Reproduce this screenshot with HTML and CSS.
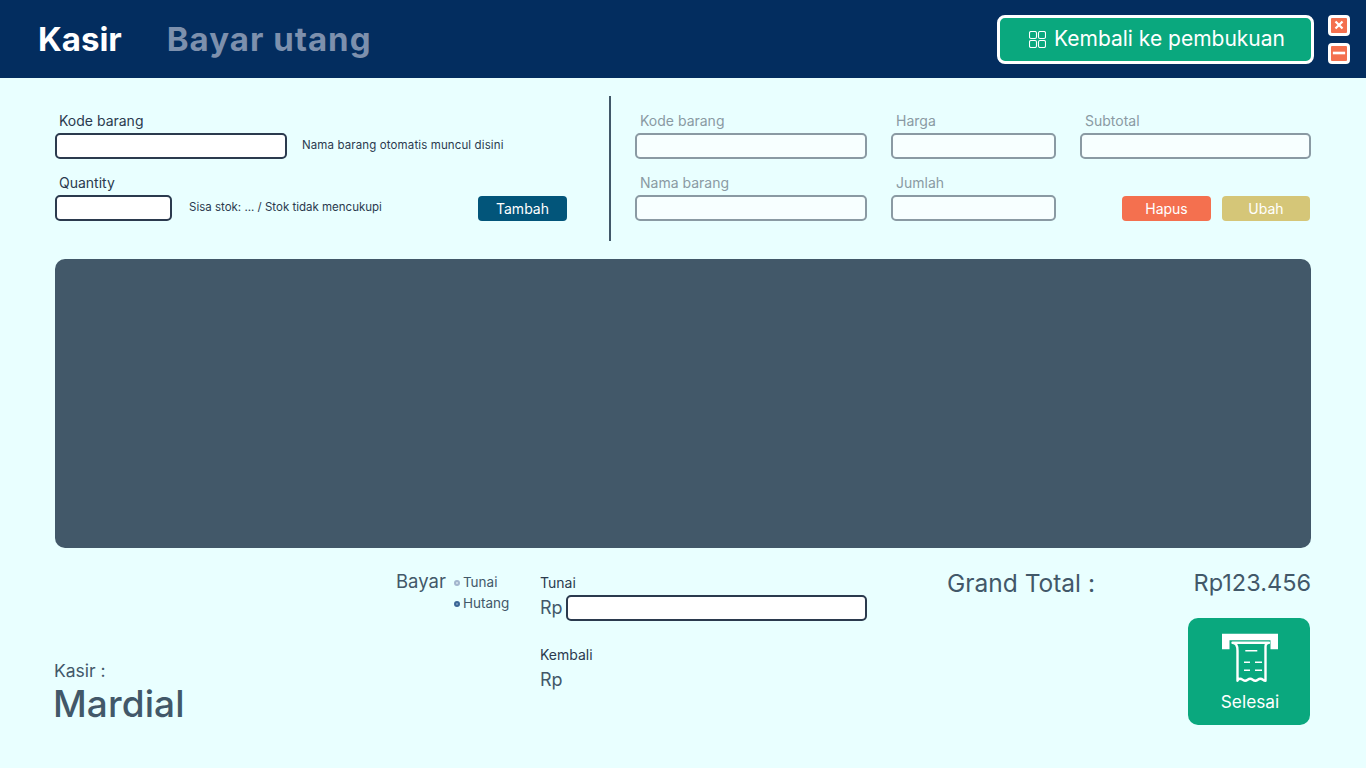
FILE: index.html
```html
<!DOCTYPE html>
<html lang="id">
<head>
<meta charset="utf-8">
<title>Kasir</title>
<link rel="stylesheet" href="styles.css">
</head>
<body>
<header class="topbar">
  <nav class="tabs">
    <span class="tab tab-active">Kasir</span>
    <span class="tab tab-muted">Bayar utang</span>
  </nav>
  <div class="top-actions">
    <button class="back-btn">
      <svg class="back-icon" viewBox="0 0 17 17" fill="none" stroke="#fff" stroke-width="1.1">
        <rect x="0.5" y="0.5" width="7" height="7" rx="1.5"/><rect x="9.5" y="0.5" width="7" height="7" rx="1.5"/>
        <rect x="0.5" y="9.5" width="7" height="7" rx="1.5"/><rect x="9.5" y="9.5" width="7" height="7" rx="1.5"/>
      </svg>
      <span>Kembali ke pembukuan</span>
    </button>
    <div class="win-btns">
      <span class="win-btn"><svg viewBox="0 0 16 16" class="win-icon"><path d="M4 4l8 8M12 4l-8 8" stroke="#fff" stroke-width="2.6"/></svg></span>
      <span class="win-btn"><svg viewBox="0 0 16 16" class="win-icon"><path d="M1 8h14" stroke="#fff" stroke-width="3"/></svg></span>
    </div>
  </div>
</header>
<main class="content">
  <section class="forms">
    <div class="form-left">
      <div class="row">
        <div class="field"><label class="lbl lbl-dark">Kode barang</label><div class="box box-dark w-232"></div></div>
        <span class="note note-name">Nama barang otomatis muncul disini</span>
      </div>
      <div class="row">
        <div class="field"><label class="lbl lbl-dark">Quantity</label><div class="box box-dark w-117"></div></div>
        <span class="note note-stock">Sisa stok: ... / Stok tidak mencukupi</span>
        <button class="btn btn-blue btn-add">Tambah</button>
      </div>
    </div>
    <div class="form-right">
      <div class="row">
        <div class="field"><label class="lbl lbl-grey">Kode barang</label><div class="box box-grey w-232"></div></div>
        <div class="field gap-24"><label class="lbl lbl-grey">Harga</label><div class="box box-grey w-165"></div></div>
        <div class="field gap-24"><label class="lbl lbl-grey">Subtotal</label><div class="box box-grey w-231"></div></div>
      </div>
      <div class="row">
        <div class="field"><label class="lbl lbl-grey">Nama barang</label><div class="box box-grey w-232"></div></div>
        <div class="field gap-24"><label class="lbl lbl-grey">Jumlah</label><div class="box box-grey w-165"></div></div>
        <button class="btn btn-red">Hapus</button>
        <button class="btn btn-yellow">Ubah</button>
      </div>
    </div>
  </section>
  <section class="table-panel"></section>
  <section class="summary">
    <div class="cashier">
      <div class="cashier-lbl">Kasir :</div>
      <div class="cashier-name">Mardial</div>
    </div>
    <div class="pay-method">
      <span class="pay-title">Bayar</span>
      <ul class="radios">
        <li class="radio"><span class="dot dot-off"></span>Tunai</li>
        <li class="radio"><span class="dot dot-on"></span>Hutang</li>
      </ul>
    </div>
    <div class="pay-fields">
      <div class="lbl lbl-dark">Tunai</div>
      <div class="rp-row"><span class="rp">Rp</span><div class="box box-dark w-301"></div></div>
      <div class="lbl lbl-dark kembali">Kembali</div>
      <div class="rp rp-line">Rp</div>
    </div>
    <div class="totals">
      <div class="total-row"><span>Grand Total :</span><span class="total-val">Rp123.456</span></div>
      <button class="finish">
        <svg class="finish-icon" viewBox="0 -0.7 56 50" fill="none">
          <path d="M0 0H56V15.5H48.5V6.5H7.5V15.5H0Z" fill="#fff"/>
          <path d="M10.5 9H47C44.5 9 43.5 10.5 43.5 13V47C41 47 41 45 38.4 45S35.8 47 33.3 47 30.7 45 28.2 45 25.6 47 23 47 20.5 45 18 45 16 47 15.5 47V17C15.5 12 14 9 10.5 9Z" stroke="#fff" stroke-width="2.4" stroke-linejoin="round"/>
          <path d="M23.3 17H35.3M22 28.5H28M33 28.5H40M22 36.500H28M33 36.500H40" stroke="#fff" stroke-width="1.6"/>
        </svg>
        <span>Selesai</span>
      </button>
    </div>
  </section>
</main>
</body>
</html>
```

FILE: styles.css
```css
* { box-sizing: border-box; }
html, body { margin: 0; padding: 0; }
body {
  width: 1366px;
  height: 768px;
  overflow: hidden;
  background: #e9ffff;
  color: #425869;
  font-family: "Inter", "Liberation Sans", sans-serif;
}
button { font-family: inherit; border: 0; padding: 0; }
ul { margin: 0; padding: 0; list-style: none; }

.topbar {
  height: 78px;
  background: #032d5f;
  display: flex;
  justify-content: space-between;
  align-items: center;
  padding: 0 16px 0 38px;
}
.tabs { display: flex; gap: 45px; align-items: center; }
.tab { font-size: 33px; font-weight: 700; line-height: 40px; }
.tab-active { color: #fff; }
.tab-muted { color: #7d90ad; letter-spacing: 1px; }
.top-actions { display: flex; align-items: center; gap: 14px; }
.back-btn {
  width: 317px;
  height: 49px;
  background: #0aa87e;
  border: 3px solid #fff;
  border-radius: 8px;
  color: #fff;
  font-size: 21px;
  display: flex;
  align-items: center;
  justify-content: center;
  gap: 8px;
  padding: 0 0 2px 3px;
}
.back-icon { width: 17px; height: 17px; margin-top: 3px; }
.win-btns { display: flex; flex-direction: column; gap: 7px; }
.win-btn {
  width: 22px;
  height: 21px;
  background: #f4704f;
  border: 3px solid #fff;
  border-radius: 4px;
  display: flex;
  align-items: center;
  justify-content: center;
}
.win-icon { width: 14px; height: 14px; flex: none; }

.content { padding: 18px 55px 0; }
.forms { display: flex; height: 145px; }
.form-left {
  width: 554px;
  padding-top: 15px;
  display: flex;
  flex-direction: column;
  gap: 14px;
}
.form-right {
  border-left: 2px solid #425869;
  flex: 1;
  padding: 15px 0 0 24px;
  display: flex;
  flex-direction: column;
  gap: 14px;
}
.row { display: flex; align-items: flex-end; }
.field { display: flex; flex-direction: column; gap: 2px; }
.gap-24 { margin-left: 24px; }
.lbl { font-size: 14px; line-height: 20px; padding-left: 4px; }
.lbl-dark { color: #2b3a4e; }
.lbl-grey { color: #8a9aa3; padding-left: 5px; }
.box { height: 26px; border-radius: 5px; border: 2px solid; background: #fff; }
.box-dark { border-color: #2b3a4e; }
.box-grey { border-color: #8a9aa3; background: #f7ffff; }
.w-232 { width: 232px; }
.w-117 { width: 117px; }
.w-165 { width: 165px; }
.w-231 { width: 231px; }
.w-301 { width: 301px; }
.note { font-size: 11.5px; color: #2b3a4e; line-height: 16px; padding-bottom: 6px; }
.note-name { margin-left: 15px; letter-spacing: 0.12px; }
.note-stock { margin-left: 17px; }
.btn {
  height: 25px;
  width: 89px;
  border-radius: 4px;
  color: #fff;
  font-size: 14px;
}
.btn-blue { background: #02557a; }
.btn-add { margin-left: auto; margin-right: 42px; }
.btn-red { background: #f4704f; margin-left: 66px; }
.btn-yellow { background: #d5c678; margin-left: 11px; width: 88px; }

.table-panel {
  height: 289px;
  margin-top: 18px;
  background: #425869;
  border-radius: 10px;
}

.summary { display: flex; height: 177px; }
.cashier {
  width: 341px;
  display: flex;
  flex-direction: column;
  justify-content: flex-end;
}
.cashier-lbl { font-size: 17.5px; line-height: 24px; margin-left: -1px; }
.cashier-name { font-size: 37px; line-height: 42px; margin-left: -2px; letter-spacing: 0.1px; font-weight: 500; }
.pay-method { width: 144px; display: flex; padding-top: 22px; }
.pay-title { font-size: 18.5px; line-height: 22px; }
.radios { margin-left: 8px; padding-top: 2px; }
.radio {
  display: flex;
  align-items: center;
  gap: 3px;
  font-size: 13.5px;
  line-height: 21px;
}
.dot { width: 6px; height: 6px; border-radius: 50%; border: 2px solid; }
.dot-off { border-color: #a3b6ce; background: #d5e4ec; }
.dot-on { border-color: #3b6796; background: #7f9ec0; }
.pay-fields { width: 327px; padding-top: 25px; }
.pay-fields .lbl { padding-left: 0; }
.rp-row { display: flex; align-items: center; gap: 3px; margin-top: 2px; }
.rp { font-size: 18px; line-height: 24px; }
.kembali { margin-top: 24px; }
.rp-line { margin-top: 3px; }
.totals {
  margin-left: 80px;
  flex: 1;
  display: flex;
  flex-direction: column;
  align-items: flex-end;
}
.total-row {
  width: 100%;
  height: 30px;
  margin-top: 20px;
  display: flex;
  justify-content: space-between;
  align-items: center;
  font-size: 24.5px;
  line-height: 30px;
}
.total-val { font-size: 23.5px; }
.finish {
  margin-top: 20px;
  margin-right: 1px;
  width: 122px;
  height: 107px;
  background: #0aa87e;
  border-radius: 10px;
  color: #fff;
  font-size: 17.3px;
  display: flex;
  flex-direction: column;
  align-items: center;
  padding-left: 2px;
}
.finish-icon { width: 56px; height: 50px; margin-top: 15px; margin-bottom: 8px; }
```
